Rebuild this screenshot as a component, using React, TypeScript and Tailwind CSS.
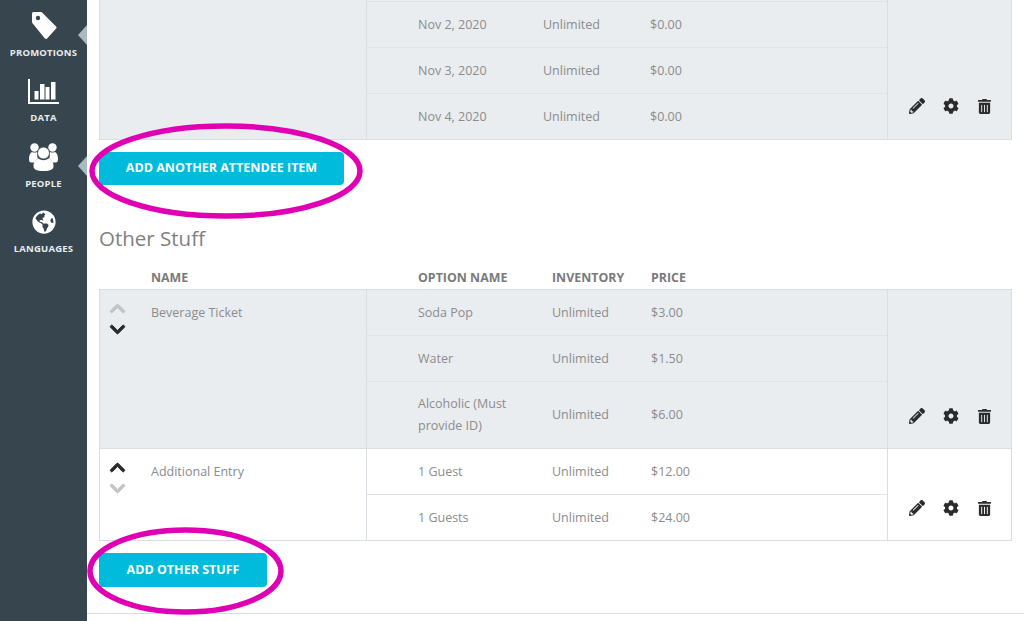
import React from "react";
import { FaGlobeAmericas, FaPencilAlt, FaCog, FaTrashAlt, FaChevronUp, FaChevronDown } from "react-icons/fa";

interface Option {
  name: React.ReactNode;
  price: string;
  height: string;
}

interface Item {
  name: string;
  shaded: boolean;
  upActive: boolean;
  downActive: boolean;
  options: Option[];
}

const attendeeItems: Item[] = [
  {
    name: "",
    shaded: true,
    upActive: false,
    downActive: true,
    options: [
      { name: "Nov 2, 2020", price: "$0.00", height: "h-[46px]" },
      { name: "Nov 3, 2020", price: "$0.00", height: "h-[46px]" },
      { name: "Nov 4, 2020", price: "$0.00", height: "h-[45px]" },
    ],
  },
];

const otherItems: Item[] = [
  {
    name: "Beverage Ticket",
    shaded: true,
    upActive: false,
    downActive: true,
    options: [
      { name: "Soda Pop", price: "$3.00", height: "h-[46px]" },
      { name: "Water", price: "$1.50", height: "h-[46px]" },
      {
        name: (
          <>
            Alcoholic (Must
            <br />
            provide ID)
          </>
        ),
        price: "$6.00",
        height: "h-[66px]",
      },
    ],
  },
  {
    name: "Additional Entry",
    shaded: false,
    upActive: true,
    downActive: false,
    options: [
      { name: "1 Guest", price: "$12.00", height: "h-[46px]" },
      { name: "1 Guests", price: "$24.00", height: "h-[45px]" },
    ],
  },
];

// Sidebar icons without a good match in the packages
const TagIcon = () => (
  <svg width="26" height="29" viewBox="0 0 26 29">
    <path d="M2.500 2.500H10L24 16.500 15 26.500 2.500 11z" fill="white" stroke="white" strokeWidth="3" strokeLinejoin="round" />
    <circle cx="7" cy="7" r="2.200" fill="#36454e" />
  </svg>
);

const ChartIcon = () => (
  <svg width="31" height="25" viewBox="0 0 31 25" fill="white">
    <rect x="0" y="0" width="2" height="25" />
    <rect x="0" y="23" width="31" height="2" />
    <rect x="6.500" y="12" width="4" height="8.500" />
    <rect x="12" y="5" width="4.500" height="15.500" />
    <rect x="17.500" y="8" width="4" height="12.500" />
    <rect x="23" y="3" width="4.500" height="17.500" />
  </svg>
);

const PeopleIcon = () => (
  <svg width="29" height="28" viewBox="0 0 29 28" fill="white">
    <circle cx="5.500" cy="4.500" r="4.200" />
    <circle cx="23.500" cy="4.500" r="4.200" />
    <path d="M0 16c0-4 1.500-6.500 3-7 1.500.8 3.500.8 5 0l1 1c-1 2-1 4 0 5.500-2 .8-3 2-3.500 4H2c-1.200 0-2-1-2-3.500z" />
    <path d="M29 16c0-4-1.500-6.500-3-7-1.500.8-3.500.8-5 0l-1 1c1 2 1 4 0 5.500 2 .8 3 2 3.500 4H27c1.200 0 2-1 2-3.500z" />
    <circle cx="14.500" cy="10" r="6" stroke="#36454e" strokeWidth="0.800" />
    <path d="M4.500 23c0-4 2-7 5-7.500 1.500 1.200 3.300 1.700 5 1.700s3.500-.5 5-1.700c3 .5 5 3.500 5 7.500 0 3.500-2.500 5-10 5s-10-1.500-10-5z" />
  </svg>
);

const navItems = [
  { label: "PROMOTIONS", icon: <TagIcon />, notch: true },
  { label: "DATA", icon: <ChartIcon />, notch: false },
  { label: "PEOPLE", icon: <PeopleIcon />, notch: true },
  { label: "LANGUAGES", icon: <FaGlobeAmericas size={24} />, notch: false },
];

const Sidebar = () => (
  <aside className="w-[87px] shrink-0 bg-[#36454e] text-white">
    <div className="-mt-[7px] flex flex-col">
      {navItems.map((nav) => (
        <div key={nav.label} className="relative flex h-[65.5px] flex-col items-center justify-end">
          <div className="flex h-[30px] items-center justify-center">{nav.icon}</div>
          <div className="mt-[4px] translate-y-[1px] text-[9.5px] font-bold leading-[14px] tracking-[0.2px] text-[#e8ecee]">{nav.label}</div>
          {nav.notch && (
            <div className="absolute right-0 top-[32px] h-0 w-0 border-y-[10px] border-r-[9px] border-y-transparent border-r-[#a8bac2]" />
          )}
        </div>
      ))}
    </div>
  </aside>
);

const ItemRow: React.FC<{ item: Item; nameWidth: string; inventoryWidth: string; clipped?: boolean }> = ({
  item,
  nameWidth,
  inventoryWidth,
  clipped,
}) => (
  <div className={`flex border-b border-[#d9dee2] last:border-b-0 ${item.shaded ? "bg-[#e9edf0]" : "bg-white"}`}>
    <div className="flex w-[266px] shrink-0 pl-[9px]">
      {clipped ? (
        // this row is scrolled off the top, only the tip of the chevron shows
        <div className="h-[17px] w-[42px] shrink-0 overflow-hidden">
          <FaChevronDown size={17} className="-mt-[13px] text-[#2b2b2b]" />
        </div>
      ) : (
        <div className="flex w-[42px] shrink-0 flex-col gap-[4px] pt-[10px]">
          <FaChevronUp size={17} stroke="currentColor" strokeWidth={30} className={item.upActive ? "text-[#2b2b2b]" : "text-[#c4c4c4]"} />
          <FaChevronDown size={17} stroke="currentColor" strokeWidth={30} className={item.downActive ? "text-[#2b2b2b]" : "text-[#c4c4c4]"} />
        </div>
      )}
      <div className="pt-[13px] text-[12.5px] leading-[20px] text-[#8c8c8c]">{item.name}</div>
    </div>
    <div className="flex-1 border-l border-[#d9dee2]">
      {clipped && <div className="h-[2px] border-b border-[#dfe3e6]" />}
      {item.options.map((option, i) => (
        <div
          key={i}
          className={`flex items-center border-b border-[#dfe3e6] pl-[51px] text-[12.5px] leading-[22px] text-[#8c8c8c] last:border-b-0 ${option.height}`}
        >
          <div className={`shrink-0 ${nameWidth}`}>{option.name}</div>
          <div className={`shrink-0 ${inventoryWidth}`}>Unlimited</div>
          <div>{option.price}</div>
        </div>
      ))}
    </div>
    <div
      className={`flex w-[124px] shrink-0 items-end justify-center gap-[18px] border-l border-[#d9dee2] pl-[1px] text-[#2b2b2b] ${
        clipped ? "pb-[25px]" : "pb-[24px]"
      }`}
    >
      <FaPencilAlt size={16} />
      <FaCog size={16} />
      <FaTrashAlt size={15} />
    </div>
  </div>
);

// Magenta hand-drawn callout round a button
const Callout: React.FC<{ className: string; width: number; height: number }> = ({ className, width, height }) => (
  <svg className={`pointer-events-none absolute ${className}`} width={width} height={height}>
    <ellipse cx={width / 2} cy={height / 2} rx={width / 2 - 3} ry={height / 2 - 3} fill="none" stroke="#e000b4" strokeWidth="5.5" />
  </svg>
);

export default function App() {
  return (
    <div className="flex h-[621px] w-[1024px] overflow-hidden bg-white font-['Open_Sans',sans-serif]">
      <Sidebar />
      <main className="flex-1">
        <div className="px-3">
          <div className="border border-t-0 border-[#d9dee2]">
            {attendeeItems.map((item, i) => (
              <ItemRow key={i} item={item} nameWidth="w-[125px]" inventoryWidth="w-[107px]" clipped />
            ))}
          </div>
          <div className="relative mt-[12px] w-fit">
            <button className="flex h-[33px] w-[245px] items-center justify-center rounded-[4px] bg-[#00bbdb] text-[12.5px] font-bold text-white">
              ADD ANOTHER ATTENDEE ITEM
            </button>
            <Callout className="-left-[10px] -top-[29px]" width={274} height={96} />
          </div>
          <h2 className="mt-[38px] h-[30px] text-[20.5px] leading-[30px] text-[#7f7f7f]">Other Stuff</h2>
          <div className="mt-[15px] flex h-[21px] items-center text-[12.4px] font-bold text-[#7a7a7a]">
            <div className="w-[319px] shrink-0 pl-[52px]">NAME</div>
            <div className="w-[134px] shrink-0">OPTION NAME</div>
            <div className="w-[99px] shrink-0">INVENTORY</div>
            <div>PRICE</div>
          </div>
          <div className="border border-[#d9dee2]">
            {otherItems.map((item, i) => (
              <ItemRow key={i} item={item} nameWidth="w-[134px]" inventoryWidth="w-[99px]" />
            ))}
          </div>
          <div className="relative mt-[12px] w-fit">
            <button className="flex h-[34px] w-[168px] items-center justify-center rounded-[4px] bg-[#00bbdb] text-[12.5px] font-bold text-white">
              ADD OTHER STUFF
            </button>
            <Callout className="-left-[12px] -top-[26px]" width={197} height={88} />
          </div>
        </div>
        <div className="mt-[26px] border-t border-[#dcdcdc]" />
      </main>
    </div>
  );
}
